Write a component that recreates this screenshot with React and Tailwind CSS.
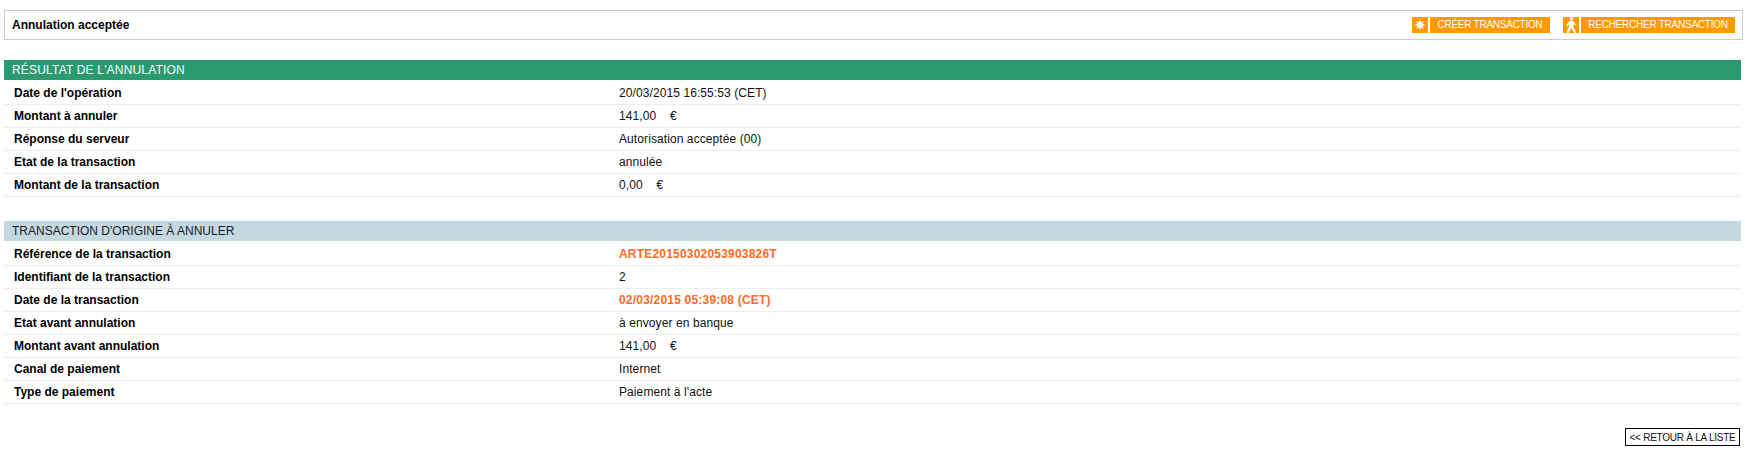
function Row({ label, value, accent }) {
  return (
    <div className="flex h-[23px] items-center border-b border-[#eeeeee] pl-[10px] box-border">
      <div className="w-[605px] shrink-0 font-bold text-[12px] text-black">{label}</div>
      <div className={accent ? "font-bold text-[12px] text-[#ff6b1f] tracking-[0.2px]" : "text-[12px] text-[#111111] whitespace-pre tracking-[0.09px]"}>{value}</div>
    </div>
  );
}
function Sun() {
  const rays = Array.from({ length: 8 }, (_, i) => i * 45);
  return (
    <svg width="12" height="12" viewBox="0 0 12 12">
      <circle cx="6" cy="6" r="3" fill="#fff" />
      {rays.map((a) => (
        <path key={a} d="M5.1 3 L6 0.2 L6.9 3 Z" fill="#fff" transform={`rotate(${a} 6 6)`} />
      ))}
    </svg>
  );
}
function Walker() {
  return (
    <svg width="14" height="16" viewBox="0 0 14 16" fill="none">
      <circle cx="7.5" cy="1.8" r="1.7" fill="#fff" />
      <path d="M5 4 L9.5 4 L10.5 7.5 L9.5 8 L9.5 10 L12 15.5 L10.2 16 L7.5 11 L4.5 16 L2.5 15.5 L5 9.5 Z" fill="#fff" />
      <path d="M5.2 4.2 L2.2 8.5 L3.3 9.2 L6 6.2 Z" fill="#fff" />
      <path d="M9.5 5 L12.5 8.5" stroke="#fff" strokeWidth="1" />
    </svg>
  );
}
function Action({ icon, label, width }) {
  return (
    <div className="flex gap-[2px]">
      <div className="w-[16px] h-[16px] bg-[#ff9900] flex items-center justify-center overflow-hidden">{icon}</div>
      <div className={`${width} h-[16px] bg-[#ff9900] text-white text-[10px] tracking-[-0.25px] flex items-center justify-center leading-[16px]`}>{label}</div>
    </div>
  );
}
export default function App() {
  return (
    <div className="w-[1745px] h-[451px] bg-white pt-[10px] pl-[4px] box-border overflow-hidden font-['Liberation_Sans',Arial,sans-serif]">
      <div className="w-[1739px] h-[30px] border border-[#cccccc] flex items-center pl-[7px] pr-[7px] box-border">
        <div className="font-bold text-[12px] text-black">Annulation acceptée</div>
        <div className="ml-auto flex gap-[13px]">
          <Action icon={<Sun />} label="CRÉER TRANSACTION" width="w-[120px]" />
          <Action icon={<Walker />} label="RECHERCHER TRANSACTION" width="w-[154px]" />
        </div>
      </div>

      <div className="w-[1737px] mt-[20px]">
        <div className="h-[20px] bg-[#2a9a70] text-white text-[12px] tracking-[0.18px] flex items-center pl-[8px]">RÉSULTAT DE L'ANNULATION</div>
        <div className="pt-[2px]">
          <Row label="Date de l'opération" value="20/03/2015 16:55:53 (CET)" />
          <Row label="Montant à annuler" value="141,00    €" />
          <Row label="Réponse du serveur" value="Autorisation acceptée (00)" />
          <Row label="Etat de la transaction" value="annulée" />
          <Row label="Montant de la transaction" value="0,00    €" />
        </div>
      </div>

      <div className="w-[1737px] mt-[24px]">
        <div className="h-[20px] bg-[#c4d8e0] text-[#1a1a2e] text-[12px] flex items-center pl-[8px]">TRANSACTION D'ORIGINE À ANNULER</div>
        <div className="pt-[2px]">
          <Row label="Référence de la transaction" value="ARTE20150302053903826T" accent />
          <Row label="Identifiant de la transaction" value="2" />
          <Row label="Date de la transaction" value="02/03/2015 05:39:08 (CET)" accent />
          <Row label="Etat avant annulation" value="à envoyer en banque" />
          <Row label="Montant avant annulation" value="141,00    €" />
          <Row label="Canal de paiement" value="Internet" />
          <Row label="Type de paiement" value="Paiement à l'acte" />
        </div>
      </div>

      <div className="w-[1736px] mt-[24px] flex justify-end">
        <div className="w-[115px] h-[18px] border border-black flex items-center justify-center text-[10px] tracking-[-0.25px] text-[#111111] box-border">&lt;&lt; RETOUR À LA LISTE</div>
      </div>
    </div>
  );
}
